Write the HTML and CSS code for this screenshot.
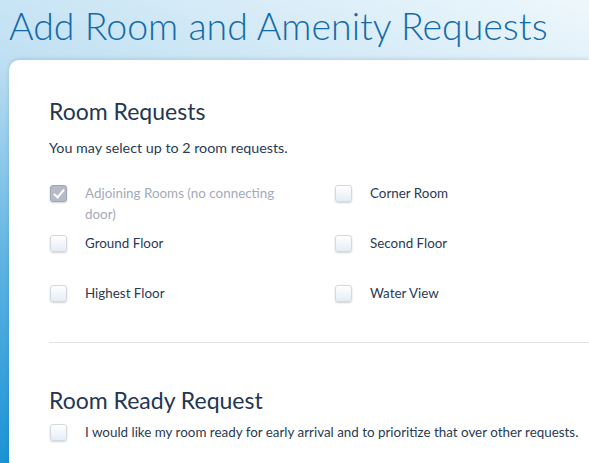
FILE: index.html
```html
<!DOCTYPE html>
<html lang="en">
<head>
    <meta charset="UTF-8">
    <meta name="viewport" content="width=device-width, initial-scale=1.0">
    <title>Add Room and Amenity Requests</title>
    <link rel="stylesheet" href="styles.css">
</head>
<body>
    <div class="page">
        <h1 class="page-title">Add Room and Amenity Requests</h1>

        <div class="card">
            <section class="section">
                <h2>Room Requests</h2>
                <p class="hint">You may select up to 2 room requests.</p>

                <div class="options">
                    <label class="option disabled">
                        <span class="box checked"></span>
                        <span class="text">Adjoining Rooms (no connecting door)</span>
                    </label>
                    <label class="option">
                        <span class="box"></span>
                        <span class="text">Corner Room</span>
                    </label>
                    <label class="option">
                        <span class="box"></span>
                        <span class="text">Ground Floor</span>
                    </label>
                    <label class="option">
                        <span class="box"></span>
                        <span class="text">Second Floor</span>
                    </label>
                    <label class="option">
                        <span class="box"></span>
                        <span class="text">Highest Floor</span>
                    </label>
                    <label class="option">
                        <span class="box"></span>
                        <span class="text">Water View</span>
                    </label>
                </div>
            </section>

            <hr class="divider">

            <section class="section">
                <h2 class="spaced">Room Ready Request</h2>
                <label class="option wide">
                    <span class="box"></span>
                    <span class="text">I would like my room ready for early arrival and to prioritize that over other requests.</span>
                </label>
            </section>
        </div>
    </div>
</body>
</html>
```

FILE: styles.css
```css
html, body {
    margin: 0;
    padding: 0;
    height: 100%;
}

body {
    font-family: Lato, "Noto Sans", sans-serif;
    color: #2a3a55;
    background: linear-gradient(20deg, #1b93d5 0%, #5fb3e2 30%, #bfe0f3 60%, #eef7fc 100%);
    overflow: hidden;
}

.page {
    padding-left: 9px;
}

.page-title {
    margin: 0;
    height: 60px;
    font-size: 37.5px;
    font-weight: 300;
    line-height: 52px;
    color: #146aa8;
    white-space: nowrap;
}

.card {
    background: #fff;
    border-top-left-radius: 10px;
    box-shadow: 0 -1px 4px rgba(0, 40, 80, 0.15);
    padding: 36px 0 40px 40px;
    min-height: 500px;
}

.section h2 {
    margin: 0;
    font-size: 23px;
    font-weight: 400;
    line-height: 30px;
    color: #253652;
}

.section h2.spaced {
    margin-bottom: 7px;
}

.hint {
    margin: 13px 0 26px;
    font-size: 14.3px;
    line-height: 18px;
}

.options {
    display: grid;
    grid-template-columns: 285px 1fr;
    grid-auto-rows: 50px;
}

.option {
    display: flex;
    align-items: flex-start;
    font-size: 13.4px;
    line-height: 21px;
}

.option .text {
    max-width: 215px;
}

.option.wide {
    margin-top: 2px;
}

.option.wide .text {
    max-width: none;
    white-space: nowrap;
}

.option.disabled .text {
    color: #a3abba;
}

.box {
    flex: none;
    width: 15px;
    height: 15px;
    margin: 2px 18px 0 1px;
    border: 1px solid #d3d9e1;
    border-radius: 3px;
    background: linear-gradient(#ffffff, #e4edf6);
    box-shadow: 0 1px 2px rgba(0, 0, 0, 0.18);
}

.box.checked {
    position: relative;
    background: #b5bcc8;
    border-color: #9ea6b4;
}

.box.checked::after {
    content: "";
    position: absolute;
    left: 5px;
    top: 1px;
    width: 4px;
    height: 9px;
    border: solid #fff;
    border-width: 0 2px 2px 0;
    transform: rotate(40deg);
}

.divider {
    border: none;
    border-top: 1px solid #e2e4e7;
    margin: 9px 0 42px;
}
```
